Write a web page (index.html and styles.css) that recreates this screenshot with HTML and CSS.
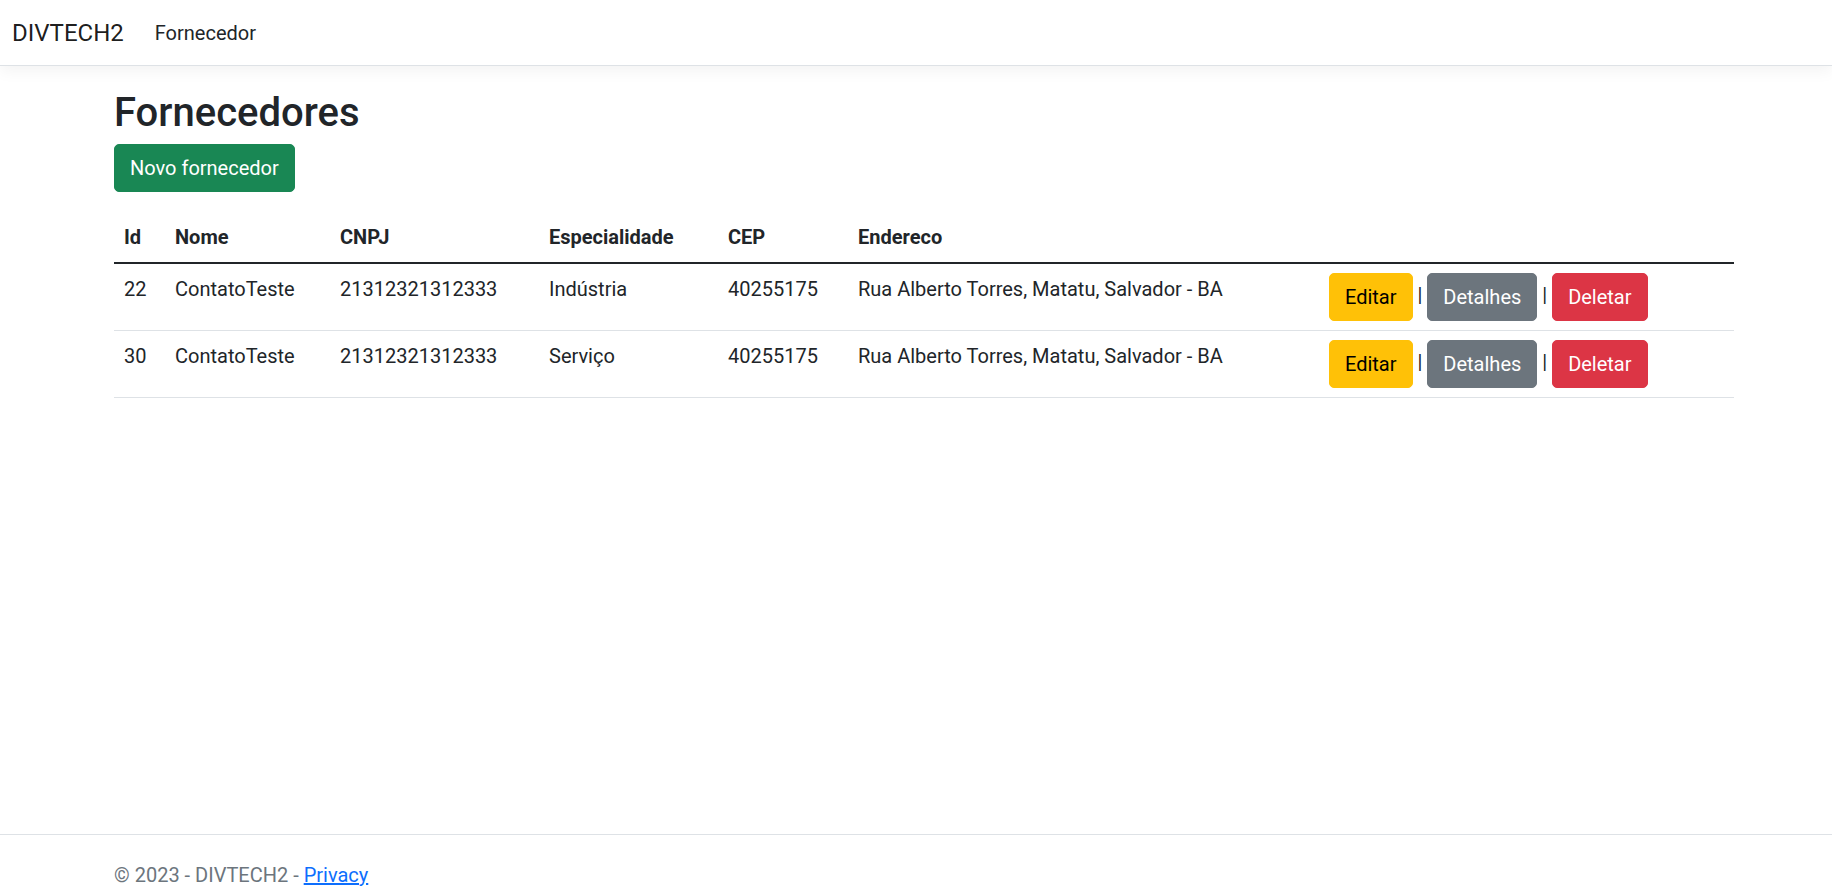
FILE: index.html
```html
<!DOCTYPE html>
<html lang="pt-br">
<head>
<meta charset="utf-8">
<title>Fornecedores - DIVTECH2</title>
<link rel="stylesheet" href="styles.css">
</head>
<body>
<header class="navbar">
  <div class="navbar-inner">
    <a class="brand" href="#">DIVTECH2</a>
    <nav class="nav">
      <a class="nav-link" href="#">Fornecedor</a>
    </nav>
  </div>
</header>

<main class="main">
  <div class="container">
    <h1 class="title">Fornecedores</h1>
    <p class="actions-top">
      <a class="btn btn-success" href="#">Novo fornecedor</a>
    </p>
    <table class="table">
      <colgroup>
        <col class="c-id">
        <col class="c-nome">
        <col class="c-cnpj">
        <col class="c-esp">
        <col class="c-cep">
        <col class="c-end">
        <col class="c-act">
      </colgroup>
      <thead>
        <tr>
          <th>Id</th>
          <th>Nome</th>
          <th>CNPJ</th>
          <th>Especialidade</th>
          <th>CEP</th>
          <th>Endereco</th>
          <th></th>
        </tr>
      </thead>
      <tbody>
        <tr>
          <td>22</td>
          <td>ContatoTeste</td>
          <td>21312321312333</td>
          <td>Indústria</td>
          <td>40255175</td>
          <td>Rua Alberto Torres, Matatu, Salvador - BA</td>
          <td><a class="btn btn-warning" href="#">Editar</a> | <a class="btn btn-secondary" href="#">Detalhes</a> | <a class="btn btn-danger" href="#">Deletar</a></td>
        </tr>
        <tr>
          <td>30</td>
          <td>ContatoTeste</td>
          <td>21312321312333</td>
          <td>Serviço</td>
          <td>40255175</td>
          <td>Rua Alberto Torres, Matatu, Salvador - BA</td>
          <td><a class="btn btn-warning" href="#">Editar</a> | <a class="btn btn-secondary" href="#">Detalhes</a> | <a class="btn btn-danger" href="#">Deletar</a></td>
        </tr>
      </tbody>
    </table>
  </div>
</main>

<footer class="footer">
  <div class="container">
    &copy; 2023 - DIVTECH2 - <a class="footer-link" href="#">Privacy</a>
  </div>
</footer>
</body>
</html>
```
FILE: styles.css
```css
* {
  box-sizing: border-box;
}

html, body {
  margin: 0;
  padding: 0;
}

body {
  font-family: Roboto, "Liberation Sans", sans-serif;
  font-size: 20px;
  line-height: 30px;
  color: #212529;
  background: #fff;
  min-height: 100vh;
  display: flex;
  flex-direction: column;
}

/* Navbar */
.navbar {
  height: 66px;
  background: #fff;
  border-bottom: 1px solid #dee2e6;
  box-shadow: 0 5px 15px rgba(0, 0, 0, 0.05);
  position: relative;
  z-index: 1;
}

.navbar-inner {
  height: 65px;
  display: flex;
  align-items: center;
  padding: 0 12px;
}

.brand {
  font-size: 24px;
  line-height: 37px;
  color: rgba(0, 0, 0, 0.9);
  text-decoration: none;
  margin-right: 21px;
  padding-top: 2px;
}

.nav {
  display: flex;
}

.nav-link {
  display: block;
  padding: 10px 10px;
  color: #212529;
  text-decoration: none;
  font-size: 20px;
  line-height: 30px;
}

/* Main */
.main {
  flex: 1;
}

.container {
  width: 1636px;
  margin: 0 auto;
  padding-left: 16px;
}

.title {
  margin: 23px 0 7px;
  font-size: 40px;
  line-height: 48px;
  font-weight: 500;
}

.actions-top {
  margin: 0 0 20px;
}

.btn {
  display: inline-block;
  padding: 8px 15px;
  font-size: 20px;
  line-height: 30px;
  border: 1px solid transparent;
  border-radius: 5px;
  text-decoration: none;
  text-align: center;
  vertical-align: middle;
}

.btn-success {
  background: #198754;
  border-color: #198754;
  color: #fff;
}

.btn-warning {
  background: #ffc107;
  border-color: #ffc107;
  color: #000;
}

.btn-secondary {
  background: #6c757d;
  border-color: #6c757d;
  color: #fff;
}

.btn-danger {
  background: #dc3545;
  border-color: #dc3545;
  color: #fff;
}

/* Table */
.table {
  width: 1620px;
  table-layout: fixed;
  border-collapse: collapse;
  margin-bottom: 20px;
  vertical-align: top;
}

.c-id { width: 51px; }
.c-nome { width: 165px; }
.c-cnpj { width: 209px; }
.c-esp { width: 179px; }
.c-cep { width: 130px; }
.c-end { width: 471px; }
.c-act { width: 415px; }

.table th,
.table td {
  padding: 9px 10px 9px;
  text-align: left;
  vertical-align: top;
  white-space: nowrap;
}

.table thead th {
  padding: 10px;
  font-weight: 700;
  border-bottom: 2px solid #212529;
}

.table tbody td {
  border-bottom: 1px solid #dee2e6;
}

.table tbody td:not(:last-child) {
  padding-top: 10px;
}

/* Footer */
.footer {
  border-top: 1px solid #dee2e6;
  height: 57px;
  padding-top: 25px;
  color: #6c757d;
  white-space: nowrap;
}

.footer-link {
  color: #0d6efd;
  text-decoration: underline;
}
```
